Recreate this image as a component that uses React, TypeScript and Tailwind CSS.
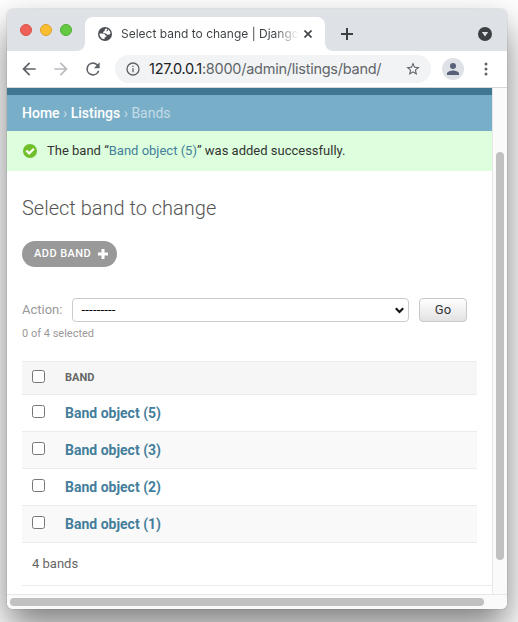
import React from "react";

function Check() {
  return <span className="block h-[13px] w-[13px] shrink-0 rounded-[2.5px] border border-[#767676] bg-white" />;
}

function TabStrip() {
  return (
    <div className="flex h-[42px] shrink-0 items-end bg-[#dee1e6]">
      <div className="flex h-[42px] w-[70px] items-center gap-2 pl-[13px]">
        <span className="h-3 w-3 rounded-full border border-[#dd5147] bg-[#ed6158]" />
        <span className="h-3 w-3 rounded-full border border-[#dfa32e] bg-[#f8be30]" />
        <span className="h-3 w-3 rounded-full border border-[#52ae31] bg-[#62c941]" />
      </div>
      <svg className="h-2 w-2 shrink-0" viewBox="0 0 8 8"><path d="M8 0v8H0a8 8 0 0 0 8-8Z" fill="#fff" /></svg>
      <div className="flex h-[34px] w-[240px] shrink-0 items-center rounded-t-[8px] bg-white pl-[13px]">
        <svg className="h-[14px] w-[14px] shrink-0" viewBox="0 0 14 14">
          <circle cx="7" cy="7" r="7" fill="#4b4e53" />
          <path d="M8.300 1.500C6.600 2 6.700 3 6.600 3.700c-.1.700-1.500.6-1.500 1.500 0 1.200 1.300 1 2.300 1.200 1.200.2 1.400 1.300 2.700 1.300 1 0 1.600-.4 2.400-.9.200-2.200-1.700-4.700-4.200-5.300z" fill="#fff" />
          <path d="M1.500 6.600h3.400c1.600 0 2.300.9 2.300 1.900h1.300c0 1.400-.7 1.900-2 1.900v1.900c-2.600.1-5-2.300-5-5.700z" fill="#fff" />
          <path d="M9 1.700c.3 1.100-.1 1.900-1 2.200.9.500 1.700.3 2.500-.8z" fill="#4b4e53" />
        </svg>
        <span className="ml-[9px] w-[178px] overflow-hidden whitespace-nowrap bg-[linear-gradient(90deg,#3c4043_86%,transparent_100%)] bg-clip-text font-['Inter','Roboto',sans-serif] text-[12px] leading-[18px] text-transparent">Select band to change | Django</span>
        <svg className="ml-[5px] h-2 w-2 shrink-0" viewBox="0 0 8 8"><path d="m.5.5 7 7m0-7-7 7" stroke="#3f4246" strokeWidth="1.6" /></svg>
      </div>
      <svg className="h-2 w-2 shrink-0" viewBox="0 0 8 8"><path d="M0 0v8h8a8 8 0 0 1-8-8Z" fill="#fff" /></svg>
      <div className="flex h-[34px] flex-1 items-center justify-between pl-2 pr-[15px]">
        <svg className="h-3 w-3" viewBox="0 0 12 12"><path d="M6 0v12M0 6h12" stroke="#3c4043" strokeWidth="2" /></svg>
        <svg className="h-[14px] w-[14px]" viewBox="0 0 14 14"><circle cx="7" cy="7" r="7" fill="#3c4043" /><path d="M3.800 5h6.400L7 9.500z" fill="#dee1e6" /></svg>
      </div>
    </div>
  );
}

function Toolbar() {
  return (
    <div className="flex h-[37px] shrink-0 items-center border-b border-[#d5d7da] bg-white pl-[12px]">
      <svg className="h-5 w-5" viewBox="0 0 24 24" fill="#5f6368"><path d="M20 11H7.830l5.590-5.590L12 4l-8 8 8 8 1.410-1.410L7.830 13H20v-2z" /></svg>
      <svg className="ml-3 h-5 w-5" viewBox="0 0 24 24" fill="#b9bbbe"><path d="m12 4-1.410 1.410L16.170 11H4v2h12.170l-5.580 5.590L12 20l8-8z" /></svg>
      <svg className="ml-3 h-5 w-5" viewBox="0 0 24 24" fill="#5f6368"><path d="M17.650 6.350A7.958 7.958 0 0 0 12 4a8 8 0 1 0 7.730 10h-2.080A6 6 0 1 1 12 6c1.660 0 3.140.69 4.220 1.780L13 11h7V4l-2.350 2.350z" /></svg>
      <div className="ml-3 flex h-7 w-[316px] items-center rounded-full bg-[#f1f3f4] pl-[10px] pr-[10px]">
        <svg className="h-4 w-4 shrink-0" viewBox="0 0 24 24" fill="#5f6368"><path d="M11 7h2v2h-2zm0 4h2v6h-2zm1-9a10 10 0 1 0 0 20 10 10 0 0 0 0-20zm0 18a8 8 0 1 1 0-16 8 8 0 0 1 0 16z" /></svg>
        <span className="ml-2 whitespace-nowrap font-['Inter','Roboto',sans-serif] text-[14.500px] leading-5 tracking-[-0.250px] text-[#62666a]"><span className="text-[#202124]">127.0.0.1</span>:8000/admin/listings/band/</span>
        <svg className="ml-auto h-4 w-4 shrink-0" viewBox="0 0 24 24" fill="#5f6368"><path d="m22 9.240-7.190-.62L12 2 9.190 8.630 2 9.240l5.460 4.730L5.820 21 12 17.270 18.180 21l-1.630-7.030L22 9.240zM12 15.400l-3.760 2.270 1-4.280-3.320-2.880 4.380-.38L12 6.100l1.710 4.040 4.380.38-3.320 2.880 1 4.280L12 15.400z" /></svg>
      </div>
      <svg className="ml-[11px] h-[22px] w-[22px]" viewBox="0 0 22 22"><circle cx="11" cy="11" r="11" fill="#dee1e6" /><circle cx="11" cy="8" r="3" fill="#59617a" /><path fill="#59617a" d="M5 17v-1.500C5 13.500 9 12.500 11 12.500s6 1 6 3V17z" /></svg>
      <svg className="ml-[20px] h-[14px] w-1" viewBox="0 0 4 14" fill="#5f6368"><circle cx="2" cy="2" r="1.500" /><circle cx="2" cy="7" r="1.500" /><circle cx="2" cy="12" r="1.500" /></svg>
    </div>
  );
}

function Row({ n, shaded }: { n: number; shaded: boolean }) {
  return (
    <div className={`flex h-[37px] border-b border-[#ebebeb] pl-[10px] ${shaded ? "bg-[#f9f9f9]" : "bg-white"}`}>
      <div className="pt-[10px]"><Check /></div>
      <a className="ml-5 pt-[9px] text-[14px] font-bold leading-[18px] text-[#447e9b]">Band object ({n})</a>
    </div>
  );
}

function AdminPage() {
  return (
    <div className="flex h-[506px] w-[485px] flex-col bg-white">
      <div className="h-[7px] bg-[#417690]" />
      <nav className="h-9 whitespace-nowrap bg-[#79aec8] pl-[15px] text-[14px] leading-9 text-[#c4dce8]">
        <span className="font-medium text-white">Home</span> › <span className="font-medium text-white">Listings</span> › Bands
      </nav>
      <div className="flex h-10 items-center bg-[#dfd] pl-4 text-[13px] text-[#333]">
        <svg className="mr-[10px] h-[14px] w-[14px]" viewBox="0 0 14 14"><circle cx="7" cy="7" r="7" fill="#70bf2b" /><path d="m3.300 6.500 2.900 2.900L10.900 4.700" fill="none" stroke="#fff" strokeWidth="2.200" /></svg>
        <span className="whitespace-nowrap">The band “<span className="text-[#447e9b]">Band object (5)</span>” was added successfully.</span>
      </div>
      <main className="flex flex-col pl-[15px] pr-[15px]">
        <h1 className="mt-[25px] h-6 text-[20px] font-light leading-6 text-[#555]">Select band to change</h1>
        <div className="mt-[21px] flex h-[26px] w-[95px] items-center rounded-full bg-[#999] pl-3 text-[11px] font-medium tracking-[0.450px] text-white">
          <span className="whitespace-nowrap">ADD BAND</span>
          <svg className="ml-[7px] h-[10px] w-[10px]" viewBox="0 0 10 10"><path d="M5 0v10M0 5h10" stroke="#fff" strokeWidth="3" /></svg>
        </div>
        <div className="mt-[31px] flex h-6 items-center text-[13px] text-[#999]">
          <span className="w-[50px]">Action:</span>
          <div className="flex h-6 w-[337px] items-center justify-between rounded-[4px] border border-[#ccc] bg-white pl-[8.500px] pr-1 text-black">
            <span className="text-[13px] tracking-[0.200px]">---------</span>
            <svg className="h-[7px] w-[9px]" viewBox="0 0 9 7"><path d="m.8 1.200 3.700 3.700L8.200 1.200" fill="none" stroke="#111" strokeWidth="2.100" /></svg>
          </div>
          <div className="ml-[10px] flex h-6 w-12 items-center justify-center rounded-[4px] border border-[#c8c8c8] bg-linear-to-b from-white to-[#e2e2e2] text-[13px] text-[#333]">Go</div>
        </div>
        <div className="mt-1 h-4 text-[11px] leading-[15px] text-[#999]">0 of 4 selected</div>
        <div className="mt-[19px] flex h-[34px] border-y border-[#ebebeb] bg-[#f6f6f6] pl-[10px]">
          <div className="pt-2"><Check /></div>
          <span className="ml-5 pt-2 text-[11px] font-bold leading-4 text-[#666]">BAND</span>
        </div>
        <Row n={5} shaded={false} />
        <Row n={3} shaded />
        <Row n={2} shaded={false} />
        <Row n={1} shaded />
      </main>
      <div className="ml-[15px] h-[43px] border-b border-[#ebebeb] pl-[10px] pt-3 text-[13px] leading-[18px] text-[#666]">4 bands</div>
    </div>
  );
}

export default function App() {
  return (
    <div className="h-[622px] w-[518px] overflow-hidden bg-white pl-[7px] pt-[9px] font-['Roboto',sans-serif]">
      <div className="h-[600px] w-[500px] rounded-[6px] shadow-[0_0_1px_rgba(0,0,0,0.6),0_18px_36px_rgba(0,0,0,0.5)]">
        <div className="flex h-full w-full flex-col overflow-hidden rounded-[6px] bg-white">
          <TabStrip />
          <Toolbar />
          <div className="flex">
            <AdminPage />
            <div className="h-[506px] w-[15px] border-l border-[#e7e7e7] bg-[#fafafa] pl-[3px] pt-16">
              <div className="h-[408px] w-2 rounded-full bg-[#c1c1c1]" />
            </div>
          </div>
          <div className="h-[15px] border-t border-[#e7e7e7] bg-[#fafafa] pl-[3px] pt-[3px]">
            <div className="h-2 w-[474px] rounded-full bg-[#c1c1c1]" />
          </div>
        </div>
      </div>
    </div>
  );
}
